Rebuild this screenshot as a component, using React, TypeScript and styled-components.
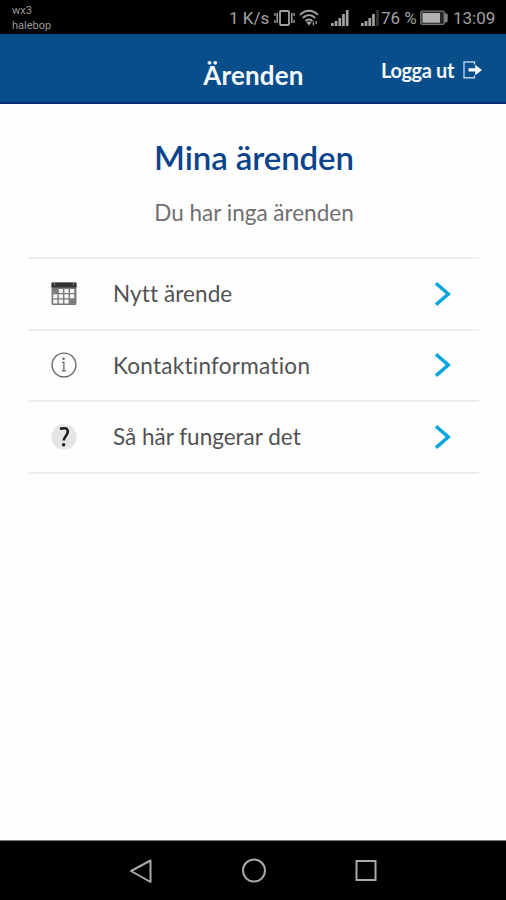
import React from 'react';
import styled, { createGlobalStyle } from 'styled-components';

const GlobalStyle = createGlobalStyle`
  * { box-sizing: border-box; }
  body { margin: 0; background: #fff; }
  svg { display: block; flex: none; }
`;

const Screen = styled.div`
  width: 506px;
  height: 900px;
  display: flex;
  flex-direction: column;
  background: #fefefe;
  font-family: Lato, sans-serif;
  font-variant-ligatures: none;
  overflow: hidden;
`;

const StatusBar = styled.div`
  height: 34px;
  flex: none;
  display: flex;
  justify-content: space-between;
  padding: 0 11px 0 12px;
  background: #000;
  color: #a2a2a2;
  font-family: Roboto, sans-serif;
`;

const Carriers = styled.div`
  padding-top: 3px;
  font-size: 11px;
  line-height: 15px;
  color: #999;
`;

const StatusItems = styled.div`
  display: flex;
  align-items: center;
  height: 36px;
`;

const StatusText = styled.span<{ $width: number }>`
  width: ${(p) => p.$width}px;
  flex: none;
  white-space: nowrap;
  font-size: 17px;
  line-height: 20px;
`;

const Gap = styled.span<{ $width: number }>`
  width: ${(p) => p.$width}px;
  flex: none;
`;

const Header = styled.header`
  height: 70px;
  flex: none;
  display: grid;
  grid-template-columns: 1fr auto 1fr;
  background: #084e8a;
  border-bottom: 2px solid #062d79;
  color: #f4f9fe;
`;

const HeaderTitle = styled.h1`
  grid-column: 2;
  margin: 0;
  padding: 25px 0 0 1px;
  font-size: 26px;
  line-height: 32px;
  letter-spacing: 0.15px;
  font-weight: 700;
`;

const Logout = styled.button`
  grid-column: 3;
  justify-self: end;
  align-self: start;
  display: flex;
  align-items: center;
  gap: 9px;
  margin: 24px 24px 0 0;
  padding: 0;
  border: 0;
  background: none;
  color: inherit;
  font: 700 20px/24px Lato, sans-serif;
  letter-spacing: -0.38px;
  white-space: nowrap;
`;

const Main = styled.main`
  flex: 1;
  padding: 0 27px 0 29px;
`;

const Heading = styled.h2`
  margin: 32px 0 0;
  text-align: center;
  color: #0b438c;
  font-size: 33px;
  line-height: 42px;
  letter-spacing: -0.1px;
  font-weight: 600;
`;

const Message = styled.p`
  margin: 21px 0 0;
  text-align: center;
  color: #707070;
  font-size: 22.5px;
  line-height: 28px;
`;

const Menu = styled.ul`
  list-style: none;
  margin: 30px 0 0;
  padding: 0;
  border-top: 2px solid #eee;
`;

const MenuItem = styled.li`
  height: 71.5px;
  display: flex;
  align-items: center;
  padding: 0 28px 0 22px;
  border-bottom: 2px solid #eee;
  color: #525252;
`;

const MenuIcon = styled.span`
  width: 62px;
  flex: none;
`;

const MenuLabel = styled.span<{ $spacing: number }>`
  flex: 1;
  padding-top: 1px;
  font-size: 22.5px;
  line-height: 30px;
  letter-spacing: ${(p) => p.$spacing}px;
`;

const NavBar = styled.nav`
  height: 60px;
  flex: none;
  display: flex;
  justify-content: space-between;
  align-items: center;
  padding: 0 128px 0 129px;
  border-top: 1px solid #777;
  background: #000;
`;

const VibrateIcon = () => (
  <svg width="22" height="20" viewBox="0 0 22 20" fill="none" stroke="#a2a2a2">
    <rect x="6" y="3" width="9" height="14" rx="1" strokeWidth="1.8" />
    <path d="M3.2 5v10M17.8 5v10" strokeWidth="1.5" />
    <path d="M.9 5v3M.9 12v3M20.1 5v3M20.1 12v3" strokeWidth="1.3" />
  </svg>
);

const WifiIcon = () => (
  <svg width="21" height="20" viewBox="0 0 21 20" fill="none" stroke="#a2a2a2" strokeWidth="1.8">
    <path d="M1 7C6 1.3 14 1.3 19 7M3.8 10.2C7.3 6.2 12.7 6.2 16.2 10.2M6.5 13.2c2-2.3 5-2.3 7 0" />
    <path d="M7.3 14.3q2.7-1.8 5.4 0L10 17.5z" fill="#a2a2a2" stroke="none" />
    <path d="M14.4 13.8v3.5M17.2 13v3" strokeWidth="1.3" />
  </svg>
);

const SignalIcon = ({ level }: { level: number }) => (
  <svg width="18" height="18" viewBox="0 0 18 18">
    {[3, 5, 8, 12, 16].map((h, i) => (
      <rect
        key={h}
        x={i * 3.7}
        y={17 - h}
        width={i < level ? 2.7 : 3.7}
        height={h}
        fill={i < level ? '#a2a2a2' : '#303030'}
      />
    ))}
  </svg>
);

const BatteryIcon = () => (
  <svg width="28" height="16" viewBox="0 0 28 16">
    <rect x=".8" y="1.2" width="23.5" height="13.2" rx="1.5" fill="#262626" stroke="#777" strokeWidth="1.3" />
    <rect x="2.5" y="3" width="17.5" height="9.7" fill="#b2b2b2" />
    <path d="M24.5 3.3h1.2q2 0 2 2v5.2q0 2-2 2h-1.2z" fill="#858585" />
  </svg>
);

const LogoutIcon = () => (
  <svg width="19" height="18" viewBox="0 0 19 18">
    <path d="M11.5 3.5V1H1v15.8h10.5v-2.4" fill="none" stroke="#b9d2ea" strokeWidth="1.4" />
    <path d="M5.5 7.3h6.7V3.7L19 9l-6.8 5.2v-3.7H5.5z" fill="#f4f9fe" />
  </svg>
);

const CalendarIcon = () => (
  <svg width="26" height="24" viewBox="0 0 26 24">
    <rect x=".5" y=".5" width="25" height="22.5" rx="1" fill="#7c7c7c" />
    <rect x=".5" y=".5" width="25" height="5" rx="1" fill="#333" />
    <path d="M3.5 0v3.3M22.5 0v3.3" stroke="#888" strokeWidth="1.2" />
    <g fill="#f5f5f5">
      {[7, 12.2, 17.4].flatMap((y, row) =>
        [2.2, 7.8, 13.4, 19].map((x, col) =>
          (row === 0 && col === 0) || (row === 2 && col === 3) ? null : (
            <rect key={`${row}${col}`} x={x} y={y} width="4.2" height="4.1" rx=".6" />
          ),
        ),
      )}
    </g>
  </svg>
);

const InfoIcon = () => (
  <svg width="26" height="26" viewBox="0 0 26 26" fill="none" stroke="#686868">
    <circle cx="13" cy="13" r="11.9" strokeWidth="1.4" />
    <path d="M11 10.4h1.9v8.3M11 18.9h3.8" strokeWidth="1.3" />
    <circle cx="12.6" cy="6.8" r="1.3" fill="#686868" stroke="none" />
  </svg>
);

const HelpIcon = () => (
  <svg width="26" height="26" viewBox="0 0 26 26">
    <circle cx="13" cy="13" r="12.7" fill="#e5e5e5" />
    <path d="M9 4.8Q16.8 2.6 16.8 7.8c0 4-4 4.5-4 8.8" fill="none" stroke="#171717" strokeWidth="2.5" />
    <circle cx="12.6" cy="20.8" r="1.7" fill="#171717" />
  </svg>
);

const ChevronIcon = () => (
  <svg width="16" height="26" viewBox="0 0 16 26">
    <path d="M1 2.2L13.3 13 1 23.8" fill="none" stroke="#0aa5df" strokeWidth="3.5" />
  </svg>
);

const items = [
  { label: 'Nytt ärende', icon: <CalendarIcon />, spacing: 0.1 },
  { label: 'Kontaktinformation', icon: <InfoIcon />, spacing: 0.26 },
  { label: 'Så här fungerar det', icon: <HelpIcon />, spacing: 0 },
];

const NavIcon = ({ children }: { children: React.ReactNode }) => (
  <svg width="24" height="26" viewBox="0 0 24 26" fill="none" stroke="#aaa" strokeWidth="2">
    {children}
  </svg>
);

export default function App() {
  return (
    <Screen>
      <GlobalStyle />
      <StatusBar>
        <Carriers>
          wx3
          <br />
          halebop
        </Carriers>
        <StatusItems>
          <StatusText $width={45}>1 K/s</StatusText>
          <VibrateIcon />
          <Gap $width={3} />
          <WifiIcon />
          <Gap $width={11} />
          <SignalIcon level={5} />
          <Gap $width={12} />
          <SignalIcon level={4} />
          <Gap $width={2} />
          <StatusText $width={39}>76 %</StatusText>
          <BatteryIcon />
          <Gap $width={5} />
          <StatusText $width={42}>13:09</StatusText>
        </StatusItems>
      </StatusBar>
      <Header>
        <HeaderTitle>Ärenden</HeaderTitle>
        <Logout>
          Logga ut
          <LogoutIcon />
        </Logout>
      </Header>
      <Main>
        <Heading>Mina ärenden</Heading>
        <Message>Du har inga ärenden</Message>
        <Menu>
          {items.map((item) => (
            <MenuItem key={item.label}>
              <MenuIcon>{item.icon}</MenuIcon>
              <MenuLabel $spacing={item.spacing}>{item.label}</MenuLabel>
              <ChevronIcon />
            </MenuItem>
          ))}
        </Menu>
      </Main>
      <NavBar>
        <NavIcon>
          <path d="M21.5 2.5v21.5L2 13z" strokeLinejoin="round" />
        </NavIcon>
        <NavIcon>
          <circle cx="12" cy="12.6" r="11" />
        </NavIcon>
        <NavIcon>
          <rect x="2.5" y="3" width="19" height="19" />
        </NavIcon>
      </NavBar>
    </Screen>
  );
}
